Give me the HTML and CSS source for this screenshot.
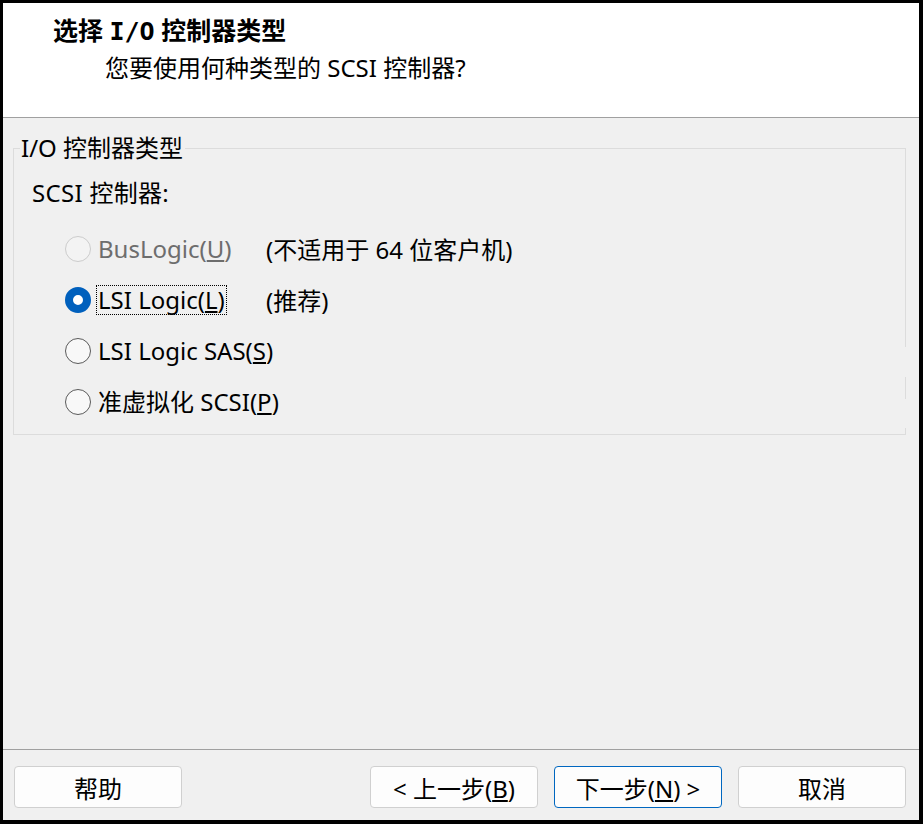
FILE: index.html
```html
<!DOCTYPE html>
<html lang="zh-CN">
<head>
<meta charset="utf-8">
<title>新建虚拟机向导</title>
<link rel="stylesheet" href="styles.css">
</head>
<body>
<div class="window">
  <div class="header">
    <div class="title">选择 <span class="mono">I/O</span> 控制器类型</div>
    <div class="subtitle">您要使用何种类型的 SCSI 控制器?</div>
  </div>
  <div class="main">
    <fieldset class="group">
      <legend class="legend">I/O 控制器类型</legend>
      <div class="caption">SCSI 控制器:</div>
      <div class="options">
        <div class="row disabled">
          <div class="choice"><span class="radio"></span><span class="label">BusLogic(<u>U</u>)</span></div>
          <span class="note">(不适用于 64 位客户机)</span>
        </div>
        <div class="row">
          <div class="choice"><span class="radio checked"></span><span class="label focus">LSI Logic(<u>L</u>)</span></div>
          <span class="note">(推荐)</span>
        </div>
        <div class="row">
          <div class="choice"><span class="radio"></span><span class="label">LSI Logic SAS(<u>S</u>)</span></div>
        </div>
        <div class="row">
          <div class="choice"><span class="radio"></span><span class="label">准虚拟化 SCSI(<u>P</u>)</span></div>
        </div>
      </div>
    </fieldset>
  </div>
  <div class="footer">
    <button class="btn">帮助</button>
    <div class="spacer"></div>
    <button class="btn">&lt; 上一步(<u>B</u>)</button>
    <button class="btn default">下一步(<u>N</u>) &gt;</button>
    <button class="btn">取消</button>
  </div>
</div>
</body>
</html>
```

FILE: styles.css
```css
html, body {
  margin: 0;
  padding: 0;
  background: #000;
}
body {
  font-family: "Noto Sans", "Noto Sans CJK SC", sans-serif;
  font-size: 24px;
  color: #000;
}
.window {
  width: 916px;
  height: 817px;
  margin: 3px 4px 4px 3px;
  display: flex;
  flex-direction: column;
  background: #f0f0f0;
}
.header {
  height: 114px;
  background: #fff;
  border-bottom: 1px solid #a0a0a0;
  box-sizing: content-box;
  flex: none;
}
.title {
  font-weight: bold;
  font-size: 25px;
  line-height: 30px;
  padding: 12px 0 0 50px;
}
.mono {
  font-family: "DejaVu Sans Mono", monospace;
}
.subtitle {
  line-height: 32px;
  padding: 5px 0 0 102px;
}
.main {
  flex: 1;
  padding: 15px 13px 0 10px;
}
.group {
  margin: 0;
  border: 1px solid #dcdcdc;
  padding: 0 0 7px 0;
  position: relative;
}
.group::after {
  content: "";
  position: absolute;
  right: -1px;
  top: 0;
  bottom: 0;
  width: 1px;
  background: linear-gradient(#dcdcdc 0, #dcdcdc 184px, #f0f0f0 184px, #f0f0f0 214px, #dcdcdc 214px, #dcdcdc 236px, #f0f0f0 236px, #f0f0f0 265px, #dcdcdc 265px);
}
.legend {
  margin-left: 6px;
  padding: 0 2px 0 1px;
  line-height: 30px;
}
.caption {
  padding-left: 18px;
  line-height: 32px;
  margin-top: 14px;
  letter-spacing: 0.3px;
}
.options {
  padding: 14px 0 0 51px;
}
.row {
  display: flex;
  align-items: center;
  height: 51px;
  white-space: nowrap;
}
.choice {
  width: 201px;
  flex: none;
  display: flex;
  align-items: center;
}
.radio {
  width: 26px;
  height: 26px;
  box-sizing: border-box;
  border: 1.5px solid #5a5a5a;
  border-radius: 50%;
  background: #f8f8f8;
  flex: none;
}
.radio.checked {
  border: 8px solid #0060bd;
  background: #fff;
}
.disabled .radio {
  border-color: #cccccc;
  background: #f3f3f3;
}
.label {
  margin-left: 5px;
  padding: 0 1px;
  line-height: 28px;
  border: 1px dotted transparent;
}
.label.focus {
  border-color: #000;
}
.disabled .label {
  color: #6d6d6d;
}
.note {
  color: #000;
}
.footer {
  height: 71px;
  box-sizing: border-box;
  flex: none;
  border-top: 1px solid #a0a0a0;
  display: flex;
  align-items: flex-start;
  padding: 16px 13px 0 11px;
  gap: 16px;
}
.spacer {
  flex: 1;
}
.btn {
  width: 168px;
  height: 42px;
  background: #fdfdfd;
  border: 1px solid #d0d0d0;
  border-radius: 4px;
  font-family: "Noto Sans", "Noto Sans CJK SC", sans-serif;
  font-size: 24px;
  color: #000;
  padding: 0;
}
.btn.default {
  border-color: #0067c0;
}
```
